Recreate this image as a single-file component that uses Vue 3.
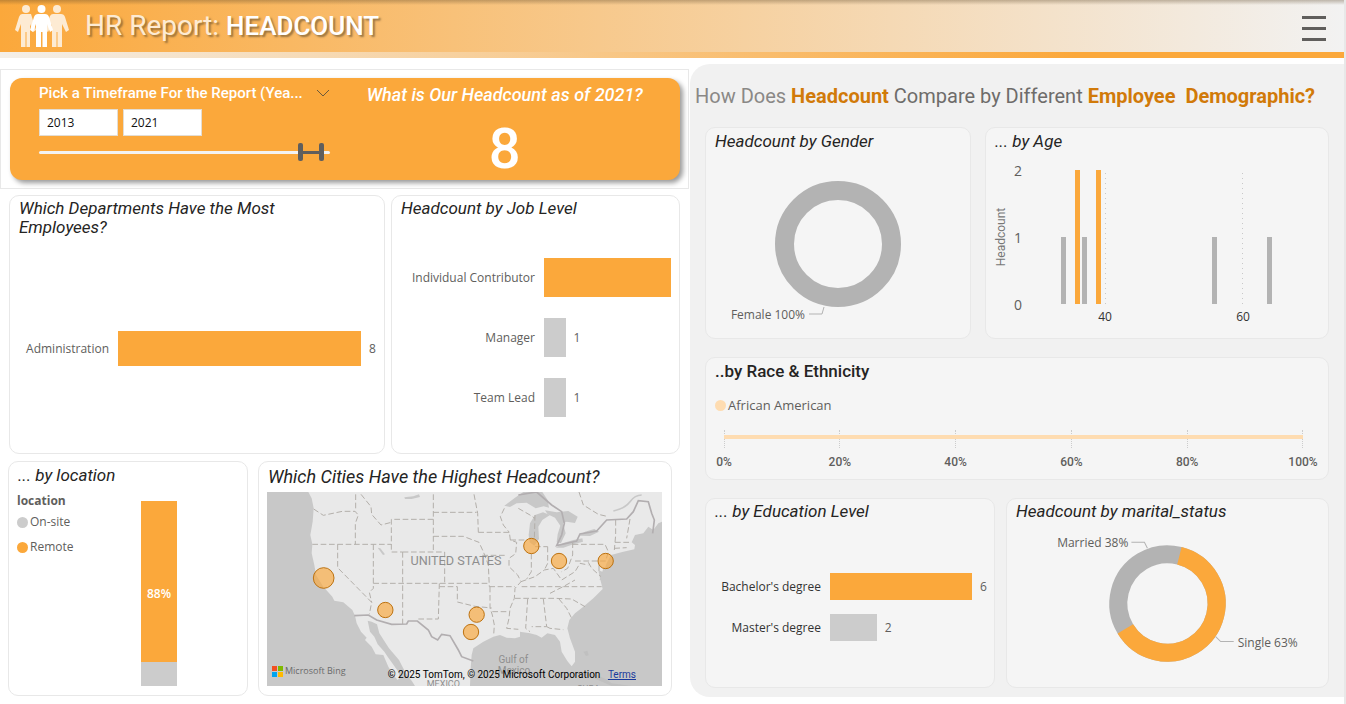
<script setup>
import { ref } from 'vue'

const fromYear = ref(2013)
const toYear = ref(2021)

const departments = [{ name: 'Administration', value: 8, share: 100, top: true }]
const levels = [
  { name: 'Individual Contributor', value: '', share: 100, top: true },
  { name: 'Manager', value: 1, share: 17 },
  { name: 'Team Lead', value: 1, share: 17 },
]
const degrees = [
  { name: "Bachelor's degree", value: 6, share: 100, top: true },
  { name: "Master's degree", value: 2, share: 33 },
]
const ages = [
  { x: 75, count: 1 },
  { x: 89, count: 2 },
  { x: 96, count: 1 },
  { x: 110, count: 2 },
  { x: 226, count: 1 },
  { x: 281, count: 1 },
]
const ticks = ['0%', '20%', '40%', '60%', '80%', '100%']
const cities = [
  { x: 206, y: 369, r: 31 },
  { x: 391, y: 465, r: 23 },
  { x: 665, y: 479, r: 23 },
  { x: 648, y: 531, r: 23 },
  { x: 829, y: 273, r: 23 },
  { x: 912, y: 318, r: 23 },
  { x: 1052, y: 318, r: 23 },
]
const stateLines = [
  'M176 162 L205 181 L262 169 L300 169 L310 180 L301 205 V268',
  'M302 118 V169',
  'M172 268 H409',
  'M318 118 L348 155 L350 178 L378 210 L409 202',
  'M535 193 H409 V291 H443',
  'M535 118 V291',
  'M443 291 H569 V385',
  'M248 268 V338 L350 442 L343 478',
  'M355 268 V400 L343 412 L350 442',
  'M355 385 H703',
  'M443 291 V507',
  'M553 385 L550 492 H487',
  'M553 395 H607 V441 L660 454 L710 459',
  'M535 172 H665',
  'M535 244 H625 L672 262 L685 290 L700 330 L703 395',
  'M657 118 L668 175 L670 232',
  'M670 232 H763 L766 255 L785 262 L782 296 L762 310 L762 335 L788 360 L798 380 L780 400 L778 430 L765 460 L762 490 L755 520 L790 523',
  'M682 301 H755',
  'M766 255 H815',
  'M748 160 L736 185 L745 210 L763 232',
  'M790 160 L825 180 L840 190',
  'M829 296 V350 L815 372',
  'M703 395 H780',
  'M705 395 V459 L712 480 L718 510 L716 540',
  'M712 470 H762',
  'M780 430 H900 L950 432 L990 455',
  'M800 395 H1040',
  'M798 380 L840 365 L868 345 L895 340 L920 375 L960 350 L975 325 L1000 330',
  'M840 275 H878',
  'M878 275 V325 L868 345',
  'M953 262 V300 L938 340 L920 350',
  'M953 268 H1050 L1060 290 L1052 318 H960',
  'M1000 322 L1010 340 L1038 365',
  'M1032 330 V350',
  'M818 432 L812 520 L825 530',
  'M865 432 L875 515 H830',
  'M875 515 L885 520 L925 524',
  'M912 432 L935 460 L950 490',
  'M885 415 L930 392 L960 375',
  'M1082 195 V240 L1078 285',
  'M1125 192 L1115 250',
  'M1080 262 H1130',
  'M1078 280 L1115 278',
  'M972 111 L985 150 L1030 178 L1060 185',
  'M840 180 L838 255',
]
</script>

<template>
  <div class="report">
    <header class="top">
      <svg class="people" viewBox="0 0 56 44" aria-hidden="true">
        <g fill="#fdebd3">
          <circle cx="12" cy="5" r="4" />
          <path d="M8 10 H17 L22 26 L19 28 L16 20 V43 H12.500 V28 H11.500 V43 H7 V20 L4 28 L1 26 L5 13 Q6 10 8 10Z" />
          <circle cx="43" cy="5" r="4" />
          <path d="M39 10 H47 Q50 10 51 13 L55 26 L52 28 L48 20 V43 H43.500 V28 H42.500 V43 H38 V20 L34 28 L31 26 L36 12 Q37 10 39 10Z" />
        </g>
        <g fill="#fff">
          <circle cx="27.500" cy="5" r="4" />
          <path d="M24 10 H31 Q34 10 35 13 L39 26 L36 28 L33 20 V43 H28.500 V28 H27 V43 H22 V20 L19 28 L16 26 L20 13 Q21 10 24 10Z" />
        </g>
      </svg>
      <h1>HR Report: <strong>HEADCOUNT</strong></h1>
      <button class="menu" type="button" aria-label="Menu"><i></i><i></i><i></i></button>
    </header>

    <main class="body">
      <div class="left">
        <section class="frame">
          <div class="banner">
            <div class="picker">
              <div class="picker-head">
                <span>Pick a Timeframe For the Report (Yea...</span>
                <button type="button" class="chev" aria-label="Expand">
                  <svg viewBox="0 0 14 8"><path d="M1 1 L7 7 L13 1" fill="none" stroke="#6b5a3c" /></svg>
                </button>
              </div>
              <div class="years">
                <input v-model="fromYear" type="text" aria-label="From year" />
                <input v-model="toYear" type="text" aria-label="To year" />
              </div>
              <div class="slider">
                <div class="rail"></div>
                <div class="link"></div>
                <input v-model="fromYear" type="range" min="1914" max="2023" aria-label="Range start" />
                <input v-model="toYear" type="range" min="1914" max="2023" aria-label="Range end" />
              </div>
            </div>
            <div class="kpi">
              <h2>What is Our Headcount as of 2021?</h2>
              <p>8</p>
            </div>
          </div>
        </section>

        <div class="row-a">
          <section class="card">
            <h3 class="narrow">Which Departments Have the Most Employees?</h3>
            <div class="bars dept">
              <div v-for="d in departments" :key="d.name" class="bar-row">
                <span class="label">{{ d.name }}</span>
                <div class="track">
                  <div class="bar" :class="{ top: d.top }" :style="{ width: d.share + '%' }"></div>
                  <span class="value">{{ d.value }}</span>
                </div>
              </div>
            </div>
          </section>
          <section class="card">
            <h3>Headcount by Job Level</h3>
            <div class="bars level">
              <div v-for="d in levels" :key="d.name" class="bar-row">
                <span class="label">{{ d.name }}</span>
                <div class="track">
                  <div class="bar" :class="{ top: d.top }" :style="{ width: d.share + '%' }"></div>
                  <span class="value">{{ d.value }}</span>
                </div>
              </div>
            </div>
          </section>
        </div>

        <div class="row-b">
          <section class="card">
            <h3>... by location</h3>
            <div class="loc">
              <div class="legend">
                <strong>location</strong>
                <span><i class="dot grey"></i>On-site</span>
                <span><i class="dot"></i>Remote</span>
              </div>
              <div class="stack">
                <div class="remote">88%</div>
                <div class="onsite"></div>
              </div>
            </div>
          </section>
          <section class="card map-card">
            <h3 class="big">Which Cities Have the Highest Headcount?</h3>
            <div class="map">
              <svg viewBox="36 111 1185 582" preserveAspectRatio="xMidYMid slice" role="img" aria-label="Map of the United States">
                <rect x="36" y="111" width="1185" height="582" fill="#c8c8c8" />
                <path
                  fill="#e9e9e9"
                  d="M160 111 L170 130 L176 160 L173 200 L166 240 L172 268 L170 295 L178 330 L183 360 L205 395 L232 425 L238 437 L265 442 L292 465 L300 482 L305 505 L318 530 L335 548 L330 555 L350 575 L362 598 L385 600 L400 635 L415 660 L428 675 L434 668 L430 650 L412 625 L398 605 L388 590 L368 568 L358 545 L345 530 L338 497 L350 500 L366 508 L373 535 L402 580 L432 615 L450 650 L472 680 L480 693 H645 L647 640 L650 600 L655 580 L685 560 L715 545 L735 540 L755 548 L780 550 L795 545 L795 530 L825 535 L845 540 L860 548 L877 535 L900 540 L915 560 L920 590 L937 618 L950 634 L960 620 L960 590 L945 550 L937 520 L943 495 L960 475 L985 455 L1015 430 L1043 402 L1035 370 L1030 345 L1045 352 L1055 325 L1068 300 L1105 290 L1138 283 L1140 270 L1130 262 L1140 240 L1165 235 L1180 215 L1195 225 L1210 205 L1221 200 V111Z"
                />
                <g fill="#c8c8c8">
                  <path d="M748 152 L780 128 L805 111 H862 L878 135 L882 158 L866 154 L842 160 L815 143 L785 145 L765 156Z" />
                  <path d="M864 172 L840 180 L825 205 L821 240 L824 262 L838 272 L852 252 L850 215 L862 195 L885 180Z" />
                  <path d="M870 166 L905 172 L940 168 L968 185 L960 204 L935 200 L924 205 L932 235 L918 264 L905 262 L908 238 L916 212 L900 188 L878 178Z" />
                  <path d="M902 278 L925 264 L955 255 L982 250 L984 260 L955 268 L925 278Z" />
                  <path d="M972 242 L990 230 L1018 222 L1032 230 L1005 243Z" />
                  <path d="M368 278 L376 280 L390 298 L384 300Z" />
                  <path d="M448 127 L475 124 L492 118 L495 126 L470 132 L450 132Z" />
                </g>
                <path d="M1075 168 Q1110 160 1125 140 T1160 120" fill="none" stroke="#c8c8c8" stroke-width="5" />
                <path d="M1048 340 L1036 375" stroke="#c8c8c8" stroke-width="5" />
                <g fill="none" stroke="#b3afaa" stroke-width="3" stroke-dasharray="17 8">
                  <path v-for="line in stateLines" :key="line" :d="line" />
                </g>
                <g fill="none" stroke="#b2aeb0" stroke-width="5">
                  <path d="M298 482 L340 480 L365 495 L410 508 L455 507 L460 498 L487 498 L520 525 L530 545 L548 555 L560 538 L585 542 L610 585 L620 605 L655 618" />
                  <path d="M790 120 L845 111 L890 150 L920 170 L928 205 L920 240 L905 272 L965 258 L975 237 L1025 228 L1055 195 L1115 192 L1135 170 L1150 137 L1180 140 L1190 175 L1198 195 L1193 235" />
                </g>
                <g fill="#c0c0c0"><path d="M985 590 l12 -3 4 14 -8 2Z M960 655 q60 -8 110 30 l60 8 h-60 l-50 -22Z" /></g>
                <g class="places">
                  <text x="603" y="330">UNITED STATES</text>
                  <text x="775" y="623" class="sea">Gulf of</text>
                  <text x="777" y="656" class="sea">Mexico</text>
                  <text x="565" y="697" class="land">MEXICO</text>
                  <text x="1000" y="710" class="land">CUBA</text>
                </g>
                <g fill="#fba83b" fill-opacity="0.65" stroke="#bd7210" stroke-width="3">
                  <circle v-for="c in cities" :key="c.x" :cx="c.x" :cy="c.y" :r="c.r" />
                </g>
              </svg>
              <div class="bing">
                <svg viewBox="0 0 11 11">
                  <path fill="#f25022" d="M0 0H5V5H0Z" />
                  <path fill="#7fba00" d="M6 0H11V5H6Z" />
                  <path fill="#00a4ef" d="M0 6H5V11H0Z" />
                  <path fill="#ffb900" d="M6 6H11V11H6Z" />
                </svg>
                Microsoft Bing
              </div>
              <div class="credit">© 2025 TomTom, © 2025 Microsoft Corporation <a href="#terms">Terms</a></div>
            </div>
          </section>
        </div>
      </div>

      <div class="right">
        <h2 class="question">
          How Does <b>Headcount</b> <span>Compare by Different</span> <b>Employee&nbsp; Demographic?</b>
        </h2>
        <div class="row-c">
          <section class="card">
            <h3>Headcount by Gender</h3>
            <svg class="chart" viewBox="0 0 264 182" role="img" aria-label="Female 100%">
              <circle cx="132" cy="88" r="53.500" fill="none" stroke="#b3b3b3" stroke-width="19" />
              <path d="M103 158 H116 L118 151" fill="none" stroke="#b3b3b3" />
              <text x="99" y="163" text-anchor="end">Female 100%</text>
            </svg>
          </section>
          <section class="card">
            <h3>... by Age</h3>
            <svg class="chart" viewBox="0 0 342 182" role="img" aria-label="Headcount by age">
              <path d="M119.500 17 V150 M256.500 17 V150" stroke="#c8c8c8" stroke-dasharray="1 4" />
              <rect
                v-for="a in ages"
                :key="a.x"
                :x="a.x"
                :y="148 - a.count * 67"
                width="5"
                :height="a.count * 67"
                :fill="a.count > 1 ? '#fba83b' : '#b3b3b3'"
              />
              <g class="axis-y" text-anchor="end">
                <text x="36" y="20">2</text>
                <text x="36" y="87">1</text>
                <text x="36" y="154">0</text>
              </g>
              <g class="axis-x" text-anchor="middle">
                <text x="119" y="165">40</text>
                <text x="257" y="165">60</text>
              </g>
              <text class="axis-name" transform="translate(19 81) rotate(-90)" text-anchor="middle">Headcount</text>
            </svg>
          </section>
        </div>
        <section class="card race">
          <h3 class="plain">..by Race &amp; Ethnicity</h3>
          <div class="legend-line"><i class="dot pale"></i>African American</div>
          <div class="axis">
            <div v-for="t in ticks" :key="t" class="tick"><i></i><span>{{ t }}</span></div>
            <div class="full"></div>
          </div>
        </section>
        <div class="row-d">
          <section class="card">
            <h3>... by Education Level</h3>
            <div class="bars degree">
              <div v-for="d in degrees" :key="d.name" class="bar-row">
                <span class="label">{{ d.name }}</span>
                <div class="track">
                  <div class="bar" :class="{ top: d.top }" :style="{ width: d.share + '%' }"></div>
                  <span class="value">{{ d.value }}</span>
                </div>
              </div>
            </div>
          </section>
          <section class="card">
            <h3>Headcount by marital_status</h3>
            <svg class="chart" viewBox="0 0 320 160" role="img" aria-label="Single 63%, Married 38%">
              <g fill="none" stroke-width="18" transform="rotate(14 160 77)">
                <circle cx="160" cy="77" r="49" stroke="#b3b3b3" />
                <circle cx="160" cy="77" r="49" stroke="#fba83b" pathLength="1000" stroke-dasharray="625 375" transform="rotate(-90 160 77)" />
              </g>
              <g fill="none" stroke="#b3b3b3">
                <path d="M124 16 H137 L140 22" />
                <path d="M208 110 L213 115 H226" />
              </g>
              <text x="121" y="21" text-anchor="end">Married 38%</text>
              <text x="230" y="120">Single 63%</text>
            </svg>
          </section>
        </div>
      </div>
    </main>
  </div>
</template>

<style>
body {
  margin: 0;
  background: #fff;
}
</style>

<style scoped>
.report {
  box-sizing: border-box;
  border-right: 2px solid #e8e8e8;
  min-height: 100vh;
  font-family: "Open Sans", "Noto Sans", sans-serif;
  font-size: 12px;
  color: #605e5c;
}
.report * {
  box-sizing: border-box;
}
h1, h2, h3, p {
  margin: 0;
}
button {
  border: 0;
  padding: 0;
  background: none;
  cursor: pointer;
}
.top {
  display: flex;
  align-items: center;
  height: 58px;
  padding: 0 18px 6px 14px;
  background:
    linear-gradient(90deg, #f4efe8, #fba83b 80%) bottom / 100% 6px no-repeat,
    linear-gradient(180deg, rgba(90, 70, 40, 0.35), rgba(90, 70, 40, 0) 5px),
    linear-gradient(90deg, #fba83b, #f2f2f2);
}
.people {
  width: 56px;
  height: 44px;
}
h1 {
  flex: 1;
  margin-left: 15px;
  font: 400 28px/40px Roboto, sans-serif;
  color: #fdebd3;
  text-shadow: 2px 2px 2px rgba(90, 70, 40, 0.6);
}
h1 strong {
  font-weight: 500;
  font-size: 26px;
  color: #fff;
}
.menu {
  display: flex;
  flex-direction: column;
  gap: 8px;
  width: 24px;
  margin-top: 4px;
}
.menu i {
  height: 3px;
  background: #605e5c;
}
.body {
  display: grid;
  grid-template-columns: 690fr 654fr;
  align-items: start;
}
.left {
  padding-top: 11px;
}
.frame {
  margin-right: 1px;
  padding: 8px 8px 8px 9px;
  border: 1px solid #e8e8e8;
}
.banner {
  display: grid;
  grid-template-columns: 320fr 351fr;
  height: 102px;
  border-radius: 12px;
  background: #fba83b;
  box-shadow: 3px 3px 5px rgba(0, 0, 0, 0.4);
}
.picker {
  padding: 5px 0 0 29px;
}
.picker-head {
  display: flex;
  justify-content: space-between;
  align-items: center;
  font: 500 15px/20px Roboto, sans-serif;
  color: #fff;
  white-space: nowrap;
}
.chev {
  display: flex;
}
.chev svg {
  width: 14px;
  height: 8px;
}
.years {
  display: flex;
  gap: 5px;
  margin-top: 6px;
}
.years input {
  width: 79px;
  height: 27px;
  padding: 0 7px;
  border: 1px solid #e3ddd3;
  background: #fff;
  font: 400 12px/16px "Open Sans", sans-serif;
  color: #111;
}
.slider {
  position: relative;
  height: 20px;
  margin-top: 6px;
}
.rail {
  position: absolute;
  inset: 9px 0 auto;
  height: 3px;
  border-radius: 2px;
  background: #f3f3f3;
}
.link {
  position: absolute;
  top: 9px;
  left: 91%;
  right: 3%;
  height: 3px;
  background: #605e5c;
}
.slider input {
  position: absolute;
  inset: 0;
  width: 100%;
  height: 20px;
  margin: 0;
  appearance: none;
  background: none;
  pointer-events: none;
}
.slider input::-webkit-slider-thumb {
  appearance: none;
  width: 5px;
  height: 18px;
  border-radius: 2px;
  background: #605e5c;
  pointer-events: auto;
}
.kpi {
  padding-top: 5px;
  color: #fff;
  text-align: center;
}
.kpi h2 {
  font: italic 500 18px/24px Roboto, sans-serif;
}
.kpi p {
  margin-top: 12px;
  font: 500 56px/60px Roboto, sans-serif;
}
.card {
  display: flex;
  flex-direction: column;
  min-width: 0;
  border: 1px solid #e8e8e8;
  border-radius: 10px;
}
h3 {
  padding: 4px 9px 0;
  font: italic 400 17px/19px Roboto, sans-serif;
  color: #252423;
}
h3.narrow {
  max-width: 290px;
}
h3.big {
  font-size: 18px;
}
h3.plain {
  font-style: normal;
  font-weight: 500;
}
.row-a {
  display: grid;
  grid-template-columns: 376fr 289fr;
  gap: 6px;
  margin: 6px 10px 0 9px;
}
.row-a .card {
  height: 259px;
}
.row-a h3 {
  padding-top: 3px;
}
.row-b {
  display: grid;
  grid-template-columns: 240fr 414fr;
  gap: 10px;
  margin: 7px 18px 0 8px;
}
.row-b .card {
  height: 235px;
}
.bars {
  flex: 1;
  display: flex;
  flex-direction: column;
  justify-content: center;
}
.bar-row {
  display: flex;
  align-items: center;
  gap: 9px;
}
.label {
  flex: none;
  text-align: right;
  white-space: nowrap;
}
.track {
  flex: 1;
  display: flex;
  align-items: center;
  gap: 8px;
  min-width: 0;
}
.bar {
  flex: none;
  height: 100%;
  background: #ccc;
}
.bar.top {
  background: #fba83b;
}
.dept {
  padding-top: 6px;
}
.dept .label {
  width: 99px;
}
.dept .track {
  height: 35px;
  margin-right: 23px;
}
.level {
  gap: 21px;
  padding-top: 3px;
  overflow: hidden;
}
.level .label {
  width: 143px;
}
.level .track {
  height: 39px;
  margin-right: 8px;
}
.degree {
  gap: 14px;
}
.degree .label {
  width: 115px;
  color: #333;
}
.degree .track {
  height: 27px;
  margin-right: 22px;
}
.loc {
  flex: 1;
  display: flex;
  padding: 16px 8px 9px;
}
.legend {
  display: flex;
  flex-direction: column;
  gap: 9px;
  width: 124px;
  margin-top: -8px;
}
.legend strong {
  margin-bottom: -4px;
  line-height: 16px;
}
.legend span,
.legend-line {
  display: flex;
  align-items: center;
  gap: 2px;
  line-height: 16px;
}
.dot {
  width: 11px;
  height: 11px;
  border-radius: 50%;
  background: #fba83b;
}
.dot.grey {
  background: #ccc;
}
.dot.pale {
  background: #fedcb1;
}
.stack {
  display: flex;
  flex-direction: column;
  width: 36px;
}
.remote {
  flex: 7;
  display: flex;
  align-items: center;
  justify-content: center;
  padding-top: 24px;
  background: #fba83b;
  color: #fff;
  font-weight: 600;
}
.onsite {
  flex: none;
  height: 24px;
  background: #ccc;
}
.map-card {
  padding: 0 9px 9px 8px;
}
.map-card h3 {
  padding: 5px 0 6px 1px;
}
.map {
  position: relative;
  flex: 1;
  min-height: 0;
  overflow: hidden;
}
.map > svg {
  display: block;
  width: 100%;
  height: 100%;
}
.places {
  font: 38px Roboto, sans-serif;
  fill: #8e8e8e;
  text-anchor: middle;
}
.places .sea {
  font-size: 30px;
}
.places .land {
  font-size: 27px;
}
.bing {
  position: absolute;
  left: 5px;
  bottom: 8px;
  display: flex;
  align-items: center;
  gap: 2px;
  font: 9px/14px "Open Sans", sans-serif;
  color: #6a6a6a;
}
.bing svg {
  width: 11px;
  height: 11px;
}
.credit {
  position: absolute;
  right: 26px;
  bottom: 4px;
  font: 10px/14px Roboto, sans-serif;
  color: #000;
}
.credit a {
  margin-left: 5px;
  color: #1a3a9c;
}
.right {
  margin-top: 6px;
  padding: 20px 15px 9px;
  border-radius: 20px 0 0 20px;
  background: #f1f1f1;
}
.question {
  margin: 0 -10px;
  font: 400 20px/24px Roboto, sans-serif;
  color: #8a8886;
  white-space: nowrap;
}
.question span {
  color: #6e6c6a;
}
.question b {
  font-weight: 700;
  color: #d17a09;
}
.right .card {
  background: #f5f5f5;
}
.row-c {
  display: grid;
  grid-template-columns: 266fr 344fr;
  gap: 14px;
  margin-top: 19px;
}
.row-c .card {
  height: 212px;
}
.row-c h3,
.row-d h3 {
  padding-bottom: 5px;
}
.row-d h3 {
  padding-top: 3px;
}
.chart {
  flex: 1;
  min-height: 0;
  width: 100%;
  font: 12px "Open Sans", sans-serif;
  fill: #605e5c;
}
.axis-y {
  font-size: 14px;
}
.axis-x {
  fill: #333;
}
.axis-name {
  font: 12px Roboto, sans-serif;
  fill: #777;
}
.race {
  height: 123px;
  margin-top: 18px;
}
.legend-line {
  margin: 16px 0 0 9px;
  font-size: 13px;
}
.axis {
  position: relative;
  display: flex;
  justify-content: space-between;
  margin: 17px 25px 0 18px;
}
.tick {
  display: flex;
  flex-direction: column;
  align-items: center;
  gap: 6px;
  width: 0;
  font: 500 12px/16px Roboto, sans-serif;
}
.tick i {
  height: 18px;
  border-left: 1px dotted #ccc;
}
.full {
  position: absolute;
  top: 5px;
  left: 0;
  right: 0;
  height: 4px;
  background: #fedcb1;
}
.row-d {
  display: grid;
  grid-template-columns: 290fr 323fr;
  gap: 11px;
  margin-top: 18px;
}
.row-d .card {
  height: 190px;
}
</style>
